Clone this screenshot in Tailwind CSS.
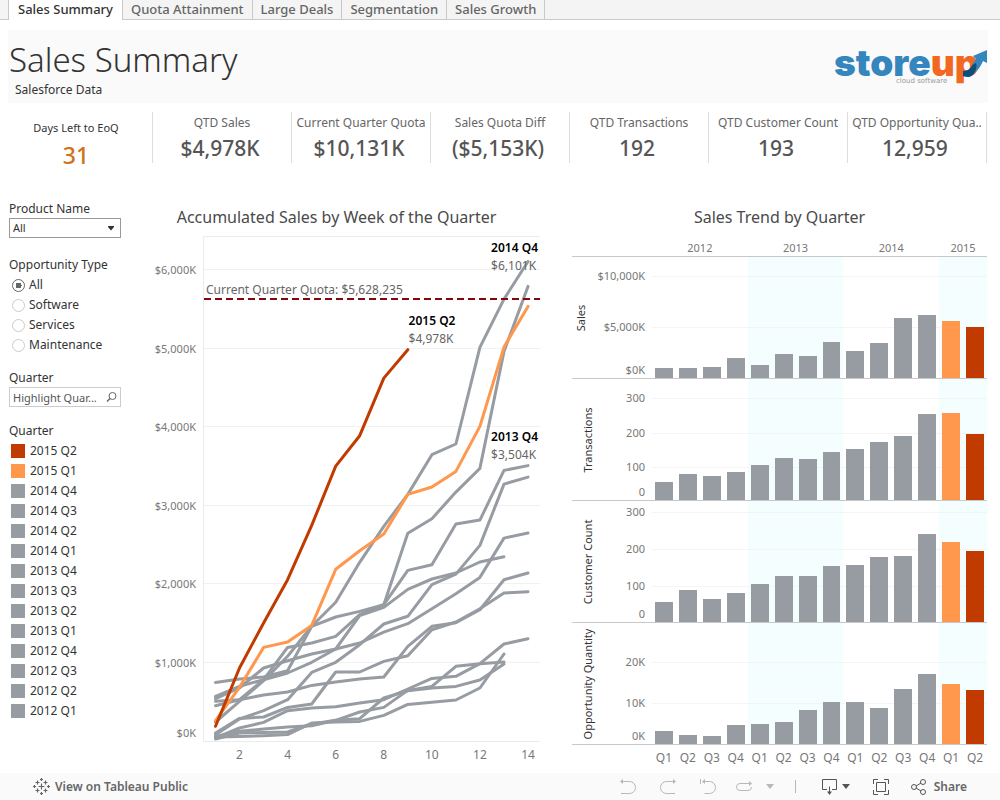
<!DOCTYPE html>
<html lang="en">
<head>
<meta charset="utf-8">
<title>Sales Summary</title>
<script src="https://cdn.jsdelivr.net/npm/@tailwindcss/browser@4"></script>
</head>
<body class="min-h-screen flex flex-col bg-white text-[#333] text-xs leading-4 font-['Noto_Sans','Open_Sans',sans-serif]">

<nav class="flex h-5 bg-[#f4f4f4] text-[13px] leading-[18px] font-medium text-[#666]">
  <span class="w-2 border-b border-[#c9c9c9]"></span>
  <a href="#summary" class="border-x border-[#c9c9c9] bg-white px-[9px] text-[#333]">Sales Summary</a>
  <a href="#quota" class="border-r border-b border-[#c9c9c9] px-2">Quota Attainment</a>
  <a href="#deals" class="border-r border-b border-[#c9c9c9] px-2">Large Deals</a>
  <a href="#segmentation" class="border-r border-b border-[#c9c9c9] px-2">Segmentation</a>
  <a href="#growth" class="border-r border-b border-[#c9c9c9] px-2">Sales Growth</a>
  <span class="flex-1 border-b border-[#c9c9c9]"></span>
</nav>

<header class="mt-[10px] ml-2 mr-3 h-[73px] flex justify-between bg-[#fafafa]">
  <div>
    <h1 class="mt-2 pl-[1px] text-[33px] leading-[44px] font-light">Sales Summary</h1>
    <p class="pl-[7px]">Salesforce Data</p>
  </div>
  <svg class="mt-1 shrink-0" width="156" height="60" viewBox="832 34 156 60" role="img" aria-label="storeup cloud software">
    <text x="834" y="76" font-family="Inter" font-weight="900" font-size="37" fill="#3585be">store<tspan fill="#f26722">up</tspan></text>
    <path d="M963 71 C968 71 970 69 973 64 L977 60 C978 69 974 77 968 77 C965 77 963 76 963 76 Z" fill="#07507f"/>
    <path d="M972 65 L976 59 L973 56 L987 50 L987 63 L983 61 C981 66 978 70 975 73 C977 70 977 67 976 63 Z" fill="#3585be"/>
    <text x="896" y="83" font-family="DejaVu Sans" font-size="7" fill="#999">cloud software</text>
  </svg>
</header>

<section class="mt-[9px] ml-2 mr-[13px] h-[51px] flex text-center text-[#666] whitespace-nowrap">
  <div class="w-[145px] border-r border-[#ddd] pt-2 pr-2"><div class="text-[11px] text-[#333]">Days Left to EoQ</div><div class="mt-[5px] text-[23px] leading-7 font-medium text-[#d17219] -mb-4">31</div></div>
  <div class="flex-1 basis-0 min-w-0 border-r border-[#ddd] pt-[3px]"><div>QTD Sales</div><div class="mt-[5px] pr-1 text-[21px] leading-6 font-medium text-[#555]">$4,978K</div></div>
  <div class="flex-1 basis-0 min-w-0 border-r border-[#ddd] pt-[3px]"><div>Current Quarter Quota</div><div class="mt-[5px] pr-1 text-[21px] leading-6 font-medium text-[#555]">$10,131K</div></div>
  <div class="flex-1 basis-0 min-w-0 border-r border-[#ddd] pt-[3px]"><div>Sales Quota Diff</div><div class="mt-[5px] pr-1 text-[21px] leading-6 font-medium text-[#555]">($5,153K)</div></div>
  <div class="flex-1 basis-0 min-w-0 border-r border-[#ddd] pt-[3px]"><div>QTD Transactions</div><div class="mt-[5px] pr-1 text-[21px] leading-6 font-medium text-[#555]">192</div></div>
  <div class="flex-1 basis-0 min-w-0 border-r border-[#ddd] pt-[3px]"><div>QTD Customer Count</div><div class="mt-[5px] pr-1 text-[21px] leading-6 font-medium text-[#555]">193</div></div>
  <div class="flex-1 basis-0 min-w-0 border-r border-[#ddd] pt-[3px]"><div>QTD Opportunity Qua..</div><div class="mt-[5px] pr-1 text-[21px] leading-6 font-medium text-[#555]">12,959</div></div>
</section>

<main class="flex-1 flex pt-[38px] pl-[9px] pr-[13px]">
  <aside class="w-28 shrink-0">
    <label for="product" class="block">Product Name</label>
    <div class="relative mt-[1px]">
      <select id="product" class="block h-5 w-full appearance-none border border-[#999] bg-white pl-[3px] text-[11px] leading-4"><option>All</option></select>
      <svg class="absolute right-[7px] top-2 pointer-events-none" width="6" height="5" viewBox="0 0 6 5"><path d="M0 0H6V1L3 4.500L0 1Z" fill="#333"/></svg>
    </div>
    <fieldset class="mt-[19px]">
      <legend>Opportunity Type</legend>
      <div class="mt-[2px] *:flex *:h-5 *:items-center *:gap-1 *:pl-[3px]">
        <label><input type="radio" name="type" checked class="size-[13px] appearance-none rounded-full border border-[#666] bg-white bg-radial from-[#666] from-[3px] to-transparent to-[3px]">All</label>
        <label><input type="radio" name="type" class="size-[13px] appearance-none rounded-full border border-[#ccc] bg-white">Software</label>
        <label><input type="radio" name="type" class="size-[13px] appearance-none rounded-full border border-[#ccc] bg-white">Services</label>
        <label><input type="radio" name="type" class="size-[13px] appearance-none rounded-full border border-[#ccc] bg-white">Maintenance</label>
      </div>
    </fieldset>
    <label for="highlight" class="mt-[15px] block">Quarter</label>
    <div class="relative mt-[1px]">
      <input id="highlight" placeholder="Highlight Quar..." class="block h-5 w-full border border-[#ccc] bg-white pl-[3px] pr-5 text-[11px] placeholder:text-[#555]">
      <svg class="absolute right-[4px] top-[4px]" width="11" height="12" viewBox="0 0 11 12" fill="none" stroke="#666"><circle cx="6.500" cy="5" r="3.500"/><path d="M4 7.500L1 10.500" stroke-width="1.500"/></svg>
    </div>
    <h2 class="mt-4">Quarter</h2>
    <ul id="legend" class="mt-[2px]"></ul>
  </aside>

  <section class="ml-6 w-[395px] grow flex flex-col">
    <h2 class="ml-[-12px] pt-1 h-[35px] text-center text-base leading-6 text-[#4a4a4a]">Accumulated Sales by Week of the Quarter</h2>
    <div class="flex flex-1">
      <div id="salesAxis" class="relative w-[58px] shrink-0 text-[11px] text-[#777]"></div>
      <div class="relative flex-1">
        <svg id="lines" class="block h-full w-full absolute inset-0" viewBox="0 0 337 506" preserveAspectRatio="none" fill="none" stroke-width="3" stroke-linecap="round" stroke-linejoin="round"></svg>
        <div class="absolute left-[3px] top-[9%] text-[#666]">Current Quarter Quota: $5,628,235</div>
        <div class="absolute left-[61%] top-[15%] leading-[18px]"><b class="block font-semibold text-black">2015 Q2</b><span class="text-[#666]">$4,978K</span></div>
        <div class="absolute right-[2px] top-[3px] leading-[18px]"><b class="block font-semibold text-black">2014 Q4</b><span class="text-[#666]">$6,101K</span></div>
        <div class="absolute right-[2px] top-[38%] leading-[18px]"><b class="block font-semibold text-black">2013 Q4</b><span class="text-[#666]">$3,504K</span></div>
      </div>
    </div>
    <div id="weeks" class="relative ml-[58px] h-[31px] text-[#777]"></div>
  </section>

  <section class="ml-8 w-[415px] grow flex flex-col">
    <h2 class="pt-1 h-[35px] text-center text-base leading-6 text-[#4a4a4a]">Sales Trend by Quarter</h2>
    <div class="ml-20 h-5 grid grid-cols-14 text-center text-[11px] leading-6 text-[#777]"><span class="col-span-4">2012</span><span class="col-span-4">2013</span><span class="col-span-4">2014</span><span class="col-span-2">2015</span></div>
    <div id="panels" class="flex flex-1 flex-col border-t border-[#c8c8c8]"></div>
    <div id="quarters" class="ml-20 h-7 grid grid-cols-14 pt-[5px] text-center text-[#777]"></div>
  </section>
</main>

<footer class="h-[27px] flex items-center bg-[#fafafa] pl-[33px] pr-[33px] text-xs font-semibold text-[#666]">
  <a href="#public" class="flex items-center gap-[5px]">
    <svg width="17" height="17" viewBox="0 0 17 17" fill="none" stroke="#666" stroke-width="1.200"><path d="M8.500 5.500v6M5.500 8.500h6M4.500 2.500v4M2.500 4.500h4M12.500 2.500v4M10.500 4.500h4M4.500 10.500v4M2.500 12.500h4M12.500 10.500v4M10.500 12.500h4M8.500 0v3M7 1.500h3M8.500 14v3M7 15.500h3M1.500 7v3M0 8.500h3M15.500 7v3M14 8.500h3"/></svg>
    View on Tableau Public
  </a>
  <div class="ml-auto flex items-center">
    <button aria-label="Undo" class="mr-6"><svg width="16" height="17" viewBox="0 0 16 17" fill="none" stroke="#b8b8b8"><path d="M1 3.500H9.500A6 6 0 0 1 9.500 15.500H1"/><path d="M0 3.500L3 1V6Z" fill="#b8b8b8" stroke="none"/></svg></button>
    <button aria-label="Redo" class="mr-6"><svg width="16" height="17" viewBox="0 0 16 17" fill="none" stroke="#b8b8b8"><path d="M15 3.500H6.500A6 6 0 0 0 6.500 15.500H15"/><path d="M16 3.500L13 1V6Z" fill="#b8b8b8" stroke="none"/></svg></button>
    <button aria-label="Revert" class="mr-5"><svg width="16" height="17" viewBox="0 0 16 17" fill="none" stroke="#b8b8b8"><path d="M.5 1V6M3 3.500H9.500A6 6 0 0 1 9.500 15.500H4.500"/><path d="M2 3.500L5 1V6Z" fill="#b8b8b8" stroke="none"/></svg></button>
    <button aria-label="Refresh" class="flex items-center gap-[14px]"><svg width="16" height="13" viewBox="0 0 16 13" fill="none" stroke="#b8b8b8"><path d="M14 3.500H4A3.500 3.500 0 0 0 4 10.500H12A3.500 3.500 0 0 0 15.500 7"/><path d="M16 3.500L13 1V6Z" fill="#b8b8b8" stroke="none"/></svg><svg width="8" height="5" viewBox="0 0 8 5"><path d="M0 0H8L4 5Z" fill="#b8b8b8"/></svg></button>
    <span class="ml-[21px] h-[13px] w-px bg-[#b8b8b8]"></span>
    <button aria-label="Download" class="ml-[26px] flex items-center gap-[5px]"><svg width="15" height="16" viewBox="0 0 15 16" fill="none" stroke="#555"><path d="M5 10.500H.5V.5H14.500V10.500H10M7.500 7.500V13"/><path d="M5 12.500H10L7.500 16Z" fill="#555" stroke="none"/></svg><svg width="8" height="5" viewBox="0 0 8 5"><path d="M0 0H8L4 5Z" fill="#555"/></svg></button>
    <button aria-label="Full screen" class="ml-[23px]"><svg width="16" height="16" viewBox="0 0 16 16" fill="none" stroke="#555"><path d="M.5 5V.5H5M11 .5H15.500V5M15.500 11V15.500H11M5 15.500H.5V11M3.500 3.500H12.500V12.500H3.500Z"/></svg></button>
    <button class="ml-[22px] flex items-center gap-2"><svg width="15" height="16" viewBox="0 0 15 16" fill="none" stroke="#555"><circle cx="3" cy="8" r="2.500"/><circle cx="12" cy="3" r="2.500"/><circle cx="12" cy="13" r="2.500"/><path d="M5 7L10 4M5 9L10 12"/></svg>Share</button>
  </div>
</footer>

<script>
const GRAY = '#979ca3', ORANGE = '#ff974c', RED = '#c13b00';

document.getElementById('legend').innerHTML =
  ['2015 Q2','2015 Q1','2014 Q4','2014 Q3','2014 Q2','2014 Q1','2013 Q4','2013 Q3','2013 Q2','2013 Q1','2012 Q4','2012 Q3','2012 Q2','2012 Q1']
  .map((q, i) => `<li class="flex h-5 items-center gap-[5px] pl-[2px]"><span class="size-[14px]" style="background:${[RED, ORANGE][i] || GRAY}"></span>${q}</li>`).join('');

// Accumulated sales in $K, one row per quarter, one value per week
const series = [
  [GRAY, [242,505,767,1077,1459,1764,2273,2731,3137,3642,3778,5008,5622,6101]],
  [GRAY, [746,788,814,895,1459,1577,1649,1734,2642,2828,3167,3468,4957,5784]],
  [GRAY, [449,526,780,1191,1247,1331,1607,1734,2171,2243,2760,2811,3443,3504]],
  [GRAY, [80,280,386,526,873,1001,1225,1488,1586,1989,2124,2489,3269,3358]],
  [GRAY, [568,695,780,865,1001,1170,1247,1386,1492,1683,1874,2082,2582,2646]],
  [GRAY, [538,674,929,1022,1107,1170,1594,1700,1929,2061,2137,2277,2345]],
  [GRAY, [505,526,585,623,708,750,789,814,1204,1459,1505,1671,2052,2137]],
  [GRAY, [102,288,305,428,471,878,878,1013,1085,1416,1514,1683,1883,1900]],
  [GRAY, [38,165,237,386,420,437,483,526,661,797,823,984,1234,1302]],
  [GRAY, [59,123,153,178,195,263,369,428,644,695,950,984,1005]],
  [GRAY, [51,59,68,81,229,242,250,326,466,492,521,674,1107]],
  [GRAY, [25,102,110,114,216,263,284,547,640,674,695,776,979]],
  [ORANGE, [259,683,1191,1259,1471,2184,2421,2633,3138,3231,3430,4003,5012,5529]],
  [RED, [187,929,1501,2052,2743,3498,3884,4617,4978]]
];
const X = w => 12.5 + 24.04 * (w - 1), Y = v => 505 - v * 0.0786;
let s = '';
for (const v of [1000,2000,3000,4000,5000,6000]) s += `<path d="M0 ${Math.floor(Y(v)) + .5}H337" stroke="#f1f1f1" stroke-width="1"/>`;
s += '<path d="M337 .5H.5V505.500H337" stroke="#ebebeb" stroke-width="1"/>';
for (const [c, vals] of series)
  s += `<polyline vector-effect="non-scaling-stroke" stroke="${c}" points="${vals.map((v, i) => X(i + 1).toFixed(1) + ',' + Y(v).toFixed(1)).join(' ')}"/>`;
s += '<path d="M1 63H337" stroke="#850510" stroke-width="2" stroke-linecap="butt" stroke-dasharray="7 4"/>';
document.getElementById('lines').innerHTML = s;

document.getElementById('salesAxis').innerHTML = [0,1000,2000,3000,4000,5000,6000]
  .map(v => `<span class="absolute right-[7px] -translate-y-1/2" style="top:${(v ? Y(v) + .5 : 497) / 5.06}%">$${v.toLocaleString('en-US')}K</span>`).join('');
document.getElementById('weeks').innerHTML = [2,4,6,8,10,12,14]
  .map(w => `<span class="absolute top-[5px] -translate-x-1/2" style="left:${X(w) / 3.37}%">${w}</span>`).join('');

// Bar heights and tick positions are in units of a 121-unit panel, measured from its top for ticks
const panels = [
  ['Sales', 'left-[1px]', [[18.5,'$10,000K'],[69.5,'$5,000K'],[113,'$0K']], [10,10,11,20,13,24,22,36,27,35,60,63,57,51]],
  ['Transactions', 'left-2', [[18.5,'300'],[53.5,'200'],[87.5,'100'],[113,'0']], [18,26,24,28,35,42,41,48,51,58,64,86,87,66]],
  ['Customer Count', 'left-2', [[10.5,'300'],[47.5,'200'],[84.5,'100'],[113,'0']], [20,32,23,29,38,46,46,56,57,65,66,88,80,71]],
  ['Opportunity Quantity', 'left-2', [[38.5,'20K'],[80.5,'10K'],[113,'0K']], [13,9,8,19,20,22,34,42,42,36,55,70,60,54]]
];
document.getElementById('panels').innerHTML = panels.map(([name, side, ticks, bars]) => `
  <div class="relative flex flex-1 basis-0 border-b border-[#c8c8c8]">
    <div class="relative w-20 shrink-0 text-[11px] text-[#777]">
      <span class="absolute ${side} top-1/2 -translate-y-1/2 rotate-180 [writing-mode:vertical-rl] whitespace-nowrap text-[#333]">${name}</span>
      ${ticks.map(([y, t]) => `<span class="absolute right-[7px] -translate-y-1/2" style="top:${y / 1.21}%">${t}</span>`).join('')}
    </div>
    <div class="relative flex-1 grid grid-cols-14">
      ${bars.map((h, i) => `<div class="${(i > 3 && i < 8) || i > 11 ? 'bg-[#f4fefe]' : ''}"></div>`).join('')}
      ${ticks.filter(t => t[0] !== 113).map(([y]) => `<i class="absolute inset-x-0 h-px bg-[#f4f4f4]" style="top:${y / 1.21}%"></i>`).join('')}
      <div class="absolute inset-0 grid grid-cols-14 items-end">
        ${bars.map((h, i) => `<div class="mx-[3px]" style="height:${h / 1.21}%;background:${i === 12 ? ORANGE : i === 13 ? RED : GRAY}"></div>`).join('')}
      </div>
    </div>
  </div>`).join('');
document.getElementById('quarters').innerHTML =
  ['Q1','Q2','Q3','Q4','Q1','Q2','Q3','Q4','Q1','Q2','Q3','Q4','Q1','Q2'].map(q => `<span>${q}</span>`).join('');
</script>
</body>
</html>
